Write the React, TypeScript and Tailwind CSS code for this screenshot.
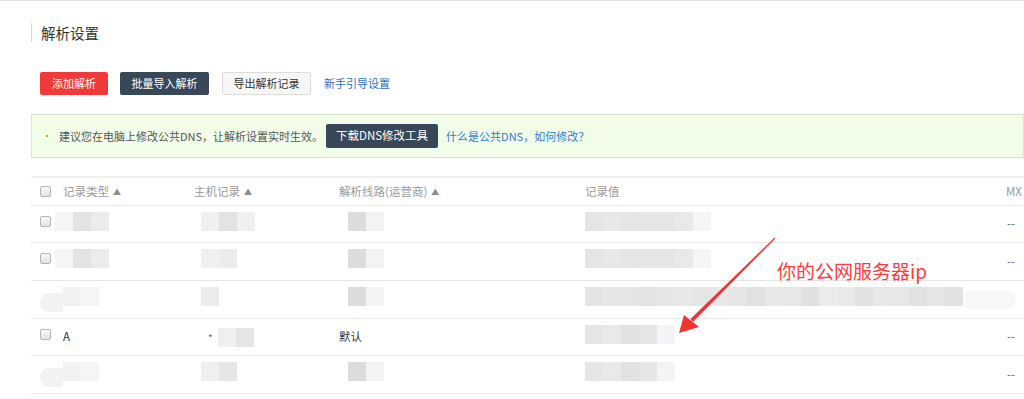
import React from 'react';

const font = { fontFamily: '"Noto Sans CJK SC", "Liberation Sans", sans-serif' };

type Cell = string[];

interface Row {
  height: string;
  check: boolean;
  blob?: boolean;
  type: Cell | string;
  host: Cell | string;
  line: Cell | string;
  value: Cell;
  mx: Cell | string;
}

const rows: Row[] = [
  {
    height: 'h-[37px]',
    check: true,
    type: ['#f5f5f5', '#e3e3e3', '#ececec'],
    host: ['#f0f0f0', '#e3e3e3', '#eff0f0'],
    line: ['#dcdcdc', '#f3f3f3'],
    value: ['#e5e5e6', '#e8e8e8', '#e5e5e5', '#e6e6e6', '#e6e6e6', '#e9e9e9', '#f4f5f7'],
    mx: '--',
  },
  {
    height: 'h-[38px]',
    check: true,
    type: ['#f5f5f5', '#e3e3e3', '#ececec'],
    host: ['#f0f0f0', '#ececec'],
    line: ['#dcdcdc', '#f3f3f3'],
    value: ['#e5e5e6', '#e8e8e8', '#e5e5e5', '#e6e6e6', '#e6e6e6', '#e9e9e9', '#f4f5f7'],
    mx: '--',
  },
  {
    height: 'h-[38px]',
    check: false,
    blob: true,
    type: ['#f2f2f2', '#f5f5f5'],
    host: ['#ececec'],
    line: ['#dcdcdc', '#f3f3f3'],
    value: [
      '#e4e4e4', '#e6e6e6', '#e5e5e5', '#e3e3e3', '#e6e6e6', '#e8e8e8', '#e5e5e5',
      '#e9e9e9', '#e6e6e6', '#e1e1e1', '#e8e8e8', '#e7e7e7', '#e0e0e0', '#ebebeb',
      '#e9e9e9', '#e2e2e2', '#e8e8e8', '#e7e7e7', '#e1e1e1', '#e6e6e6', '#e2e2e4',
    ],
    mx: ['#f8f8f8'],
  },
  {
    height: 'h-[37px]',
    check: true,
    type: 'A',
    host: '*',
    line: '默认',
    value: ['#e6e6e6', '#e9e9e9', '#e2e2e2', '#e6e6e6', '#f3f4f6'],
    mx: '--',
  },
  {
    height: 'h-[38px]',
    check: false,
    blob: true,
    type: ['#f2f2f2', '#f5f5f5'],
    host: ['#efefef', '#e6e6e6'],
    line: ['#dcdcdc', '#f3f3f3'],
    value: ['#e6e6e6', '#e9e9e9', '#e2e2e2', '#e6e6e6', '#f3f4f6'],
    mx: '--',
  },
];

const Checkbox: React.FC = () => (
  <span className="inline-block w-[11px] h-[11px] rounded-[2px] border border-[#b5b5b5] bg-gradient-to-b from-[#fafafa] to-[#e2e2e2]" />
);

const Mosaic: React.FC<{ cells: Cell; className?: string }> = ({ cells, className }) => (
  <div className={`flex mt-[6px] ${className ?? ''}`}>
    {cells.map((c, i) => (
      <span key={i} className="w-[18px] h-[19px]" style={{ backgroundColor: c }} />
    ))}
  </div>
);

const SortHead: React.FC<{ label: string }> = ({ label }) => (
  <span className="flex items-center gap-[4px]">
    {label}
    <span className="text-[8px] text-[#8a8a8a]">▲</span>
  </span>
);

const App: React.FC = () => {
  return (
    <div className="relative w-[1024px] h-[399px] overflow-hidden bg-white border-t border-[#dedede] text-[11.5px] text-[#333]" style={font}>
      <div className="pl-[31px]">
        <div className="mt-[22px] flex items-center h-[19px] border-l border-[#d8d8d8] pl-[9px]">
          <h1 className="text-[14.5px] text-[#333] leading-[19px]">解析设置</h1>
        </div>

        <div className="mt-[30px] pl-[9px] flex items-center h-[23px] text-[11px]">
          <button className="h-[23px] w-[68px] rounded-[2px] bg-[#f03a3a] text-white">添加解析</button>
          <button className="ml-[12px] h-[23px] w-[89px] rounded-[2px] bg-[#384859] text-white">批量导入解析</button>
          <button className="ml-[13px] h-[23px] w-[89px] rounded-[2px] bg-[#f6f6f6] border border-[#dcdcdc] text-[#333]">导出解析记录</button>
          <a className="ml-[13px] text-[#2a6fc4]">新手引导设置</a>
        </div>

        <div className="mt-[19px] h-[44px] border border-[#d7eac8] bg-[#f1fde9] flex items-center pl-[14px] text-[11px]">
          <span className="w-[2px] h-[2px] bg-[#dba400]" />
          <span className="ml-[11px] text-[#555]">建议您在电脑上修改公共DNS，让解析设置实时生效。</span>
          <button className="ml-[3px] h-[24px] w-[112px] rounded-[2px] bg-[#384859] text-white text-[11.5px]">下载DNS修改工具</button>
          <a className="ml-[8px] text-[#2f7ccb]">什么是公共DNS，如何修改？</a>
        </div>

        <div className="mt-[18px] border-t-2 border-[#efefef]">
          <div className="grid grid-cols-[32px_131px_145px_246px_421px_1fr] h-[28px] items-center border-b border-[#e6e6e6] text-[#9a9a9a]">
            <div className="pl-[9px] flex items-center"><Checkbox /></div>
            <SortHead label="记录类型" />
            <SortHead label="主机记录" />
            <SortHead label="解析线路(运营商)" />
            <span>记录值</span>
            <span>MX</span>
          </div>

          {rows.map((r, i) => (
            <div key={i} className={`grid grid-cols-[32px_131px_145px_246px_421px_1fr] ${r.height} border-b border-[#e6e6e6]`}>
              <div className="pl-[9px] flex items-start pt-[10px]">
                {r.check ? <Checkbox /> : <span className="mt-[2px] w-[23px] h-[19px] rounded-l-full bg-[#f2f2f2]" />}
              </div>
              <div className="flex items-center">
                {typeof r.type === 'string' ? (
                  <span>{r.type}</span>
                ) : (
                  <div className="self-start">
                    <Mosaic cells={r.type} className={r.blob ? '' : '-ml-[8px]'} />
                  </div>
                )}
              </div>
              <div className="flex items-center">
                {typeof r.host === 'string' ? (
                  <span className="flex items-center">
                    <span className="text-[10px] text-[#666] ml-[14px]">{r.host}</span>
                    <span className="ml-[5px] w-[18px] h-[19px] bg-[#f0f0f0]" />
                    <span className="w-[18px] h-[19px] bg-[#e5e5e5]" />
                  </span>
                ) : (
                  <div className="self-start ml-[7px]">
                    <Mosaic cells={r.host} />
                  </div>
                )}
              </div>
              <div className="flex items-center">
                {typeof r.line === 'string' ? (
                  <span>{r.line}</span>
                ) : (
                  <div className="self-start ml-[9px]">
                    <Mosaic cells={r.line} />
                  </div>
                )}
              </div>
              <div className="self-start">
                <Mosaic cells={r.value} />
              </div>
              <div className="flex items-center">
                {typeof r.mx === 'string' ? (
                  <span className="text-[#666] ml-[1px]">{r.mx}</span>
                ) : (
                  <span className="-ml-[42px] w-[52px] h-[19px] rounded-r-full bg-[#f8f8f8]" />
                )}
              </div>
            </div>
          ))}
        </div>
      </div>

      <span className="absolute left-[777px] top-[258px] text-[19px] leading-[24px] text-[#ff3b3b]" style={{ fontFamily: '"Noto Sans CJK SC", sans-serif' }}>
        你的公网服务器ip
      </span>
      <svg className="absolute left-0 top-0 pointer-events-none" width="1024" height="399" viewBox="0 0 1024 399">
        <polygon points="775.4,237.4 774.6,236.6 690.4,317.9 693.2,320.7" fill="#f53232" />
        <polygon points="679,332 684,314 699,326" fill="#f53232" />
      </svg>
    </div>
  );
};

export default App;
